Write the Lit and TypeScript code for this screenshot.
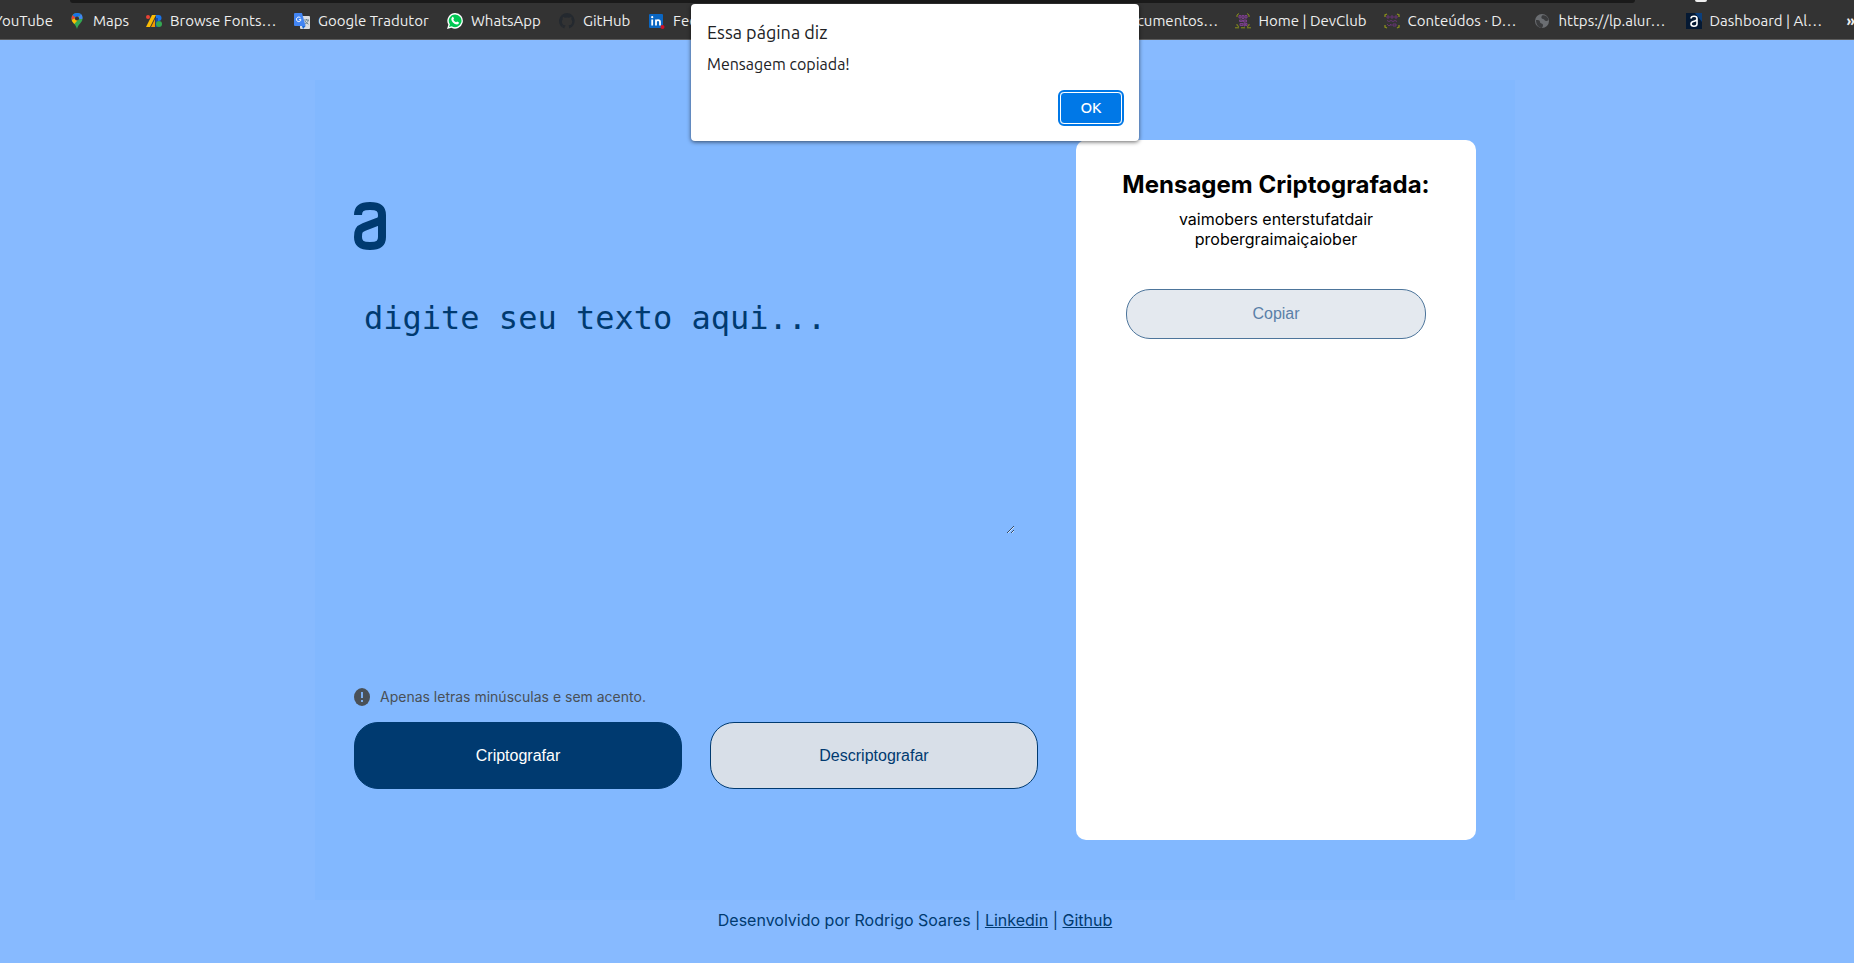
import { LitElement, html, css, svg } from "lit";
import { customElement, state } from "lit/decorators.js";
import { styleMap } from "lit/directives/style-map.js";

const icons: Record<string, unknown> = {
  maps: svg`
    <path d="M8 0C4.600 0 2.500 2.500 2.500 5.400c0 4.300 4.300 5.200 5.500 10.600 1.200-5.400 5.500-6.300 5.500-10.600C13.500 2.500 11.400 0 8 0z" fill="#34a853"/>
    <path d="M8 0C6 0 4.500 .9 3.600 2.200L8 6l4-5C11 .3 9.600 0 8 0z" fill="#1a73e8"/>
    <path d="M3.600 2.200C2.600 3.500 2.300 5.200 2.700 7L7 4.800z" fill="#ea4335"/>
    <path d="M2.700 7c.5 1.700 1.500 2.700 2.600 4L12 3.400 8 4z" fill="#fbbc04"/>
    <path d="M12 1c1.300 1.100 1.800 3 1.300 5L9 6z" fill="#4285f4"/>
    <circle cx="8" cy="5.500" r="2.100" fill="#333"/>`,
  fonts: svg`
    <circle cx="2" cy="4" r="2" fill="#ea4335"/>
    <path d="M6 2h4L4 14H0z" fill="#fbbc04"/>
    <path d="M9 6v8H5z" fill="#f29900"/>
    <path d="M10 2h2.500a3 3 0 0 1 0 6H10z" fill="#1a73e8"/>
    <path d="M9.500 5v9H12V5z" fill="#174ea6"/>
    <circle cx="13" cy="11" r="3" fill="#34a853"/>`,
  translate: svg`
    <rect x="6" y="3" width="10" height="13" rx="1" fill="#dadce0"/>
    <path d="M10 7h5M12.500 6v1M11 11c2-1 3-2 3.200-4M11 8c.8 1.500 2 2.500 3.500 3.200" stroke="#607d8b" stroke-width=".9" fill="none"/>
    <path d="M1 0h7l3.600 13H1a1 1 0 0 1-1-1V1a1 1 0 0 1 1-1z" fill="#4285f4"/>
    <path d="M8 13h3.600L9 16z" fill="#1967d2"/>
    <path d="M6.600 5A2.300 2.300 0 1 0 7 6.700H4.900" stroke="#fff" fill="none"/>`,
  whatsapp: svg`
    <path d="M8.200 0a7.800 7.800 0 0 0-6.800 11.700L0 16l4.400-1.300A7.800 7.800 0 1 0 8.200 0z" fill="#fff"/>
    <path d="M8.200 1.400a6.400 6.400 0 0 0-5.300 10L2 14l2.700-.8a6.400 6.400 0 1 0 3.500-11.800z" fill="#00c853"/>
    <path d="M5.200 4.200c.6-.6 1.100-.3 1.300.3l.5 1.200-.7 1c.7 1.300 1.500 2 2.800 2.600l1-.9 1.600.8c.4.400.1 1.700-.8 2.100-3 .9-7.200-3.300-6.500-5.900z" fill="#fff"/>`,
  github: svg`
    <path d="M8 0a8 8 0 0 0-2.500 15.600V13.500C3.300 14 2.800 12.500 2.800 12.500c.8 0 1.400.4 1.800 1 .5.500 1.200.3 1.500.1 0-.6.300-1 .5-1.200-2-.3-3.700-1-3.700-4 0-1 .4-1.700.9-2.200-.1-.3-.4-1.200.1-2.300 0 0 .8-.2 2.200.8a8 8 0 0 1 4 0c1.400-1 2.200-.8 2.200-.8.400 1.100.1 2 0 2.300.5.500.9 1.200.9 2.200 0 3-1.800 3.700-3.700 4 .3.300.6.800.6 1.500v1.700A8 8 0 0 0 8 0z" fill="#24292f"/>`,
  linkedin: svg`
    <rect y="1" width="14" height="14" rx="1" fill="#0a66c2"/>
    <path d="M3.200 6.500v6M7 12.500v-6M7 9c0-2.500 4-2.500 4 0v3.500" stroke="#fff" stroke-width="1.800" fill="none"/>
    <circle cx="3.200" cy="4.200" r="1.100" fill="#fff"/>
    <circle cx="13.500" cy="14" r="2" fill="#d11124"/>`,
  club: svg`
    <path d="M2 4V2l2-1.500M12 .5 14 2v2M2 11v1.500L4 13.500M14 11v1.500L12 13.500" stroke="#8a8f1c" fill="none"/>
    <path d="M4 2.500h2v2.500H4zM7 2.500h2v3H7zM10 2.500h2v2.500H10zM4.500 7h3v1.500h-3zM8.500 7h3v2h-3zM5 10.500h3v2H5zM9 10h1v3H9zM10.500 10.500h1.500v2h-1.500z" stroke="#7b3f8c" fill="#7b3f8c" fill-opacity=".4"/>
    <path d="M0 14.800h16" stroke="#8a8f1c" stroke-dasharray="4 2"/>`,
  content: svg`
    <path d="M1 4V2l2-1M13 1l2 1v2M1 12v2l2 1M15 12v2l-2 1" stroke="#8a8f1c" stroke-width="1.300" fill="none"/>
    <path d="M3 3h2v2H3zM7 3h2v2H7zM11 3h2v2h-2zM3 7.500l2 1 2-1 2 1 2-1 2 1M3 11l2 2 2-2v2M9 11h3v2H9z" stroke="#673474" fill="none"/>`,
  globe: svg`
    <circle cx="7" cy="8" r="7" fill="#6b6e72"/>
    <path d="M1 7c2 0 4 0 4 2s3 1 3 3-1 2-1 3c-4 0-6-4-6-8zM7 2.500c-1 2-1 3 1 3.500s1 2 4 2l1.500-1C13 4 11 1.500 7 2.500z" fill="#3a3b3d"/>`,
  alura: svg`
    <rect width="16" height="16" fill="#051933"/>
    <path d="M9 0h7v9z" fill="#0b3f7d"/>
    <path d="M5 5.500C5 2.500 11 2.500 11 5.500v5.500C11 14 5 14 5 11c0-2 1-2.300 3-2.800S11 7.500 11 6" stroke="#fff" stroke-width="1.600" fill="none"/>`,
};

interface Bookmark {
  icon: string;
  label: string;
  /** Width of the bookmark's slot in the bar, in pixels. */
  width: number;
}

const leading: Bookmark[] = [
  { icon: "", label: "YouTube", width: 75 },
  { icon: "maps", label: "Maps", width: 77 },
  { icon: "fonts", label: "Browse Fonts…", width: 148 },
  { icon: "translate", label: "Google Tradutor", width: 153 },
  { icon: "whatsapp", label: "WhatsApp", width: 112 },
  { icon: "github", label: "GitHub", width: 90 },
  { icon: "linkedin", label: "Feed", width: 80 },
];

const trailing: Bookmark[] = [
  { icon: "", label: "Documentos…", width: 117 },
  { icon: "club", label: "Home | DevClub", width: 149 },
  { icon: "content", label: "Conteúdos · D…", width: 151 },
  { icon: "globe", label: "https://lp.alur…", width: 151 },
  { icon: "alura", label: "Dashboard | Al…", width: 161 },
];

@customElement("bookmark-bar")
export class BookmarkBar extends LitElement {
  static styles = css`
    :host {
      display: block;
      background: #333;
      border-bottom: 1px solid #5c5c5c;
      font-family: Ubuntu, "Noto Sans", sans-serif;
      font-size: 15px;
      line-height: 20px;
      overflow: hidden;
    }
    .toolbar {
      display: flex;
      height: 3px;
      padding-left: 70px;
      padding-right: 147px;
    }
    .address {
      flex: 1;
      background: #1a1a1a;
      border-radius: 0 0 12px 12px;
    }
    .avatar {
      width: 12px;
      height: 2px;
      margin-left: 60px;
      background: #eee;
      border-radius: 0 0 2px 2px;
    }
    .bar {
      display: flex;
      justify-content: space-between;
      height: 36px;
      align-items: center;
    }
    .group {
      display: flex;
      white-space: nowrap;
    }
    .leading {
      margin-left: -6px;
    }
    .item {
      display: flex;
      align-items: center;
      gap: 8px;
      color: #eee;
      text-decoration: none;
    }
    .more {
      padding: 0;
      margin-right: -1px;
      border: 0;
      background: none;
      color: #eee;
      font: inherit;
      font-weight: 700;
    }
  `;

  private item(b: Bookmark) {
    return html`<a class="item" href="#" style=${styleMap({ width: `${b.width}px` })}>
      ${b.icon
        ? html`<svg width="16" height="16" viewBox="0 0 16 16" aria-hidden="true">${icons[b.icon]}</svg>`
        : null}<span>${b.label}</span></a>`;
  }

  render() {
    return html`
      <div class="toolbar"><div class="address"></div><div class="avatar"></div></div>
      <nav class="bar">
        <div class="group leading">${leading.map((b) => this.item(b))}</div>
        <div class="group">
          ${trailing.map((b) => this.item(b))}
          <button class="more" aria-label="Mais favoritos">»</button>
        </div>
      </nav>
    `;
  }
}

@customElement("app-root")
export class AppRoot extends LitElement {
  static styles = css`
    :host {
      display: block;
      position: relative;
      min-height: 100vh;
      background: #87baff;
      font-family: Inter, sans-serif;
      font-size: 16px;
      color: #000;
    }
    * {
      box-sizing: border-box;
    }
    .page {
      padding: 40px 24px 0 0;
    }
    .content {
      display: flex;
      gap: 38px;
      max-width: 1200px;
      margin: 0 auto;
      padding: 60px 39px;
      background: #82b8ff;
    }
    .editor {
      flex: 1;
      display: flex;
      flex-direction: column;
      padding: 62px 0 51px;
    }
    .logo {
      display: block;
      margin-bottom: 41px;
    }
    .text {
      width: 661px;
      max-width: 100%;
      height: 243px;
      padding: 8px 10px;
      border: 0;
      outline: 0;
      background: transparent;
      color: #003a70;
      font-family: "DejaVu Sans Mono", monospace;
      font-size: 32px;
    }
    .text::placeholder {
      color: #003a70;
      opacity: 1;
    }
    .note {
      display: flex;
      align-items: center;
      gap: 10px;
      margin: auto 0 16px;
      font-size: 14px;
      line-height: 18px;
      color: #495057;
    }
    .actions {
      display: flex;
      gap: 28px;
    }
    .button {
      border: 1px solid #003a70;
      border-radius: 24px;
      background: #d8dfe8;
      color: #003a70;
      font-family: "Liberation Sans", sans-serif;
      font-size: 16px;
    }
    .actions .button {
      flex: 1;
      height: 67px;
    }
    .actions .primary {
      background: #003a70;
      color: #fff;
    }
    .result {
      width: 400px;
      min-height: 700px;
      padding: 30px 50px;
      border-radius: 10px;
      background: #fff;
      text-align: center;
    }
    .title {
      margin: 0 -10px 10px;
      font-size: 24px;
      line-height: 29px;
      font-weight: 700;
    }
    .message {
      margin: 0 0 40px;
      padding: 0 40px;
      line-height: 20px;
    }
    .copy {
      width: 100%;
      height: 50px;
      border-color: #4d759b;
      background: #e4e9ef;
      color: #5a80a8;
    }
    .footer {
      padding: 10px 0;
      text-align: center;
      line-height: 20px;
      color: #003a70;
    }
    .footer a {
      color: inherit;
    }
    .dialog {
      position: absolute;
      top: 4px;
      left: calc(50% - 236px);
      width: 448px;
      height: 137px;
      padding: 16px;
      border-radius: 4px;
      background: #fff;
      box-shadow: 0 1px 4px rgba(0, 0, 0, 0.6);
      color: #202124;
      font-family: Ubuntu, "Noto Sans", sans-serif;
    }
    .heading {
      margin: 0 0 8px;
      font-size: 18px;
      line-height: 24px;
      font-weight: 400;
    }
    .info {
      margin: 0;
      font-size: 16px;
      line-height: 24px;
    }
    .confirm {
      display: block;
      width: 62px;
      height: 32px;
      margin: 16px 1px 0 auto;
      padding: 0;
      border: 1px solid #fff;
      border-radius: 4px;
      outline: 2px solid #0078e7;
      background: #0078e7;
      color: #fff;
      font: 500 15px/20px Ubuntu, "Noto Sans", sans-serif;
    }
  `;

  @state() private open = true;

  render() {
    return html`
      <bookmark-bar></bookmark-bar>
      <div class="page">
        <main class="content">
          <section class="editor">
            <svg class="logo" width="32" height="48" viewBox="0 0 32 48" role="img" aria-label="Alura">
              <path
                d="M4 13C4 6 8 4 16 4s12 2 12 9v22c0 7-4 9-12 9S4 42 4 35c0-6 1-8 6-10l13-5c4-1.500 5-3 5-7"
                fill="none" stroke="#003a70" stroke-width="8" />
            </svg>
            <textarea class="text" aria-label="Texto" placeholder="digite seu texto aqui..."></textarea>
            <p class="note">
              <svg width="16" height="18" viewBox="0 0 16 18" aria-hidden="true">
                <ellipse cx="8" cy="9" rx="8" ry="9" fill="#495057" />
                <path d="M8 4v6M8 12v2" stroke="#82b8ff" stroke-width="1.800" />
              </svg>
              Apenas letras minúsculas e sem acento.
            </p>
            <div class="actions">
              <button class="button primary">Criptografar</button>
              <button class="button">Descriptografar</button>
            </div>
          </section>
          <section class="result">
            <h1 class="title">Mensagem Criptografada:</h1>
            <p class="message">vaimobers enterstufatdair probergraimaiçaiober</p>
            <button class="button copy" @click=${() => (this.open = true)}>Copiar</button>
          </section>
        </main>
        <footer class="footer">
          Desenvolvido por Rodrigo Soares | <a href="#">Linkedin</a> | <a href="#">Github</a>
        </footer>
      </div>
      ${this.open
        ? html`<div class="dialog" role="alertdialog" aria-labelledby="heading" aria-describedby="info">
            <h2 class="heading" id="heading">Essa página diz</h2>
            <p class="info" id="info">Mensagem copiada!</p>
            <button class="confirm" @click=${() => (this.open = false)}>OK</button>
          </div>`
        : null}
    `;
  }
}
